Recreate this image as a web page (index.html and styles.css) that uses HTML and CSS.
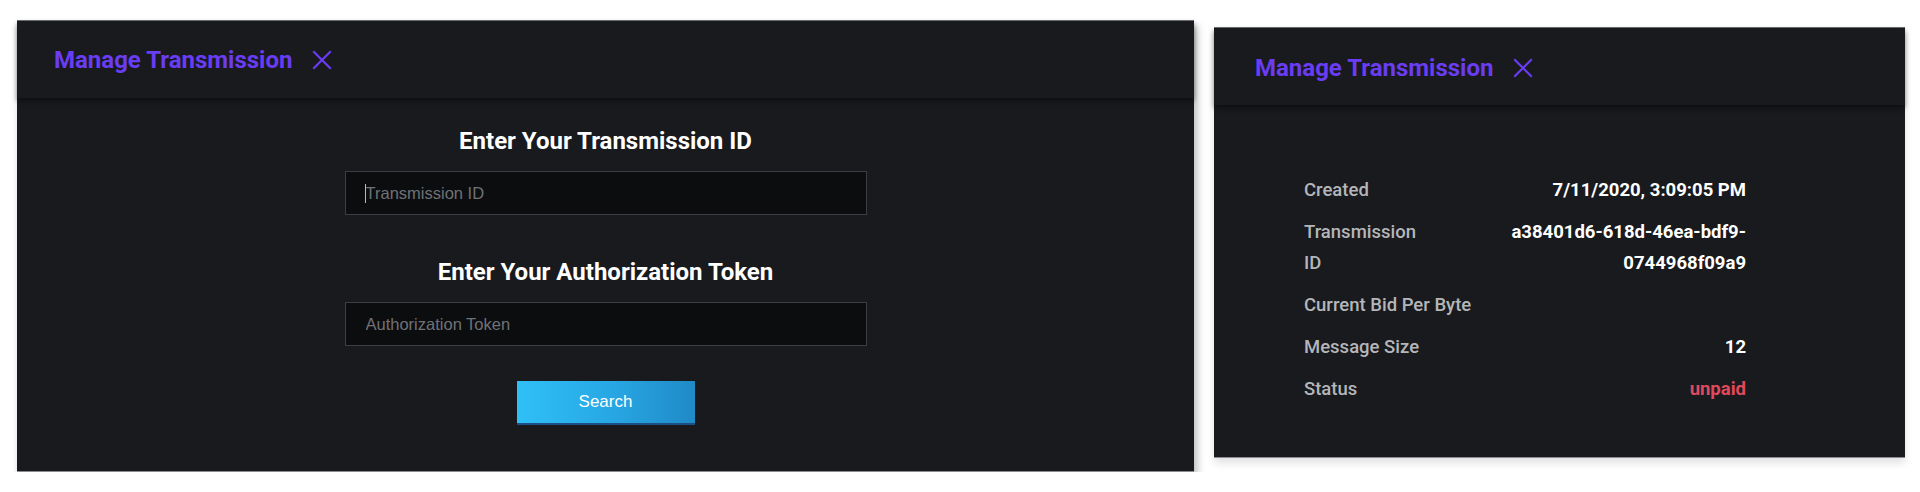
FILE: index.html
```html
<!DOCTYPE html>
<html lang="en">
<head>
<meta charset="utf-8">
<title>Manage Transmission</title>
<link rel="stylesheet" href="styles.css">
</head>
<body>
<div class="page">
  <section class="panel panel-search">
    <header class="panel-head">
      <h2 class="panel-title">Manage Transmission</h2>
      <button class="close-btn" type="button" aria-label="Close">
        <svg viewBox="0 0 20 20" width="20" height="20"><path d="M2 2 L18 18 M18 2 L2 18" fill="none" stroke="currentColor" stroke-width="2.2" stroke-linecap="square"/></svg>
      </button>
    </header>
    <div class="panel-body search-body">
      <h3 class="field-title">Enter Your Transmission ID</h3>
      <div class="field">
        <input class="text-input" type="text" placeholder="Transmission ID">
        <span class="caret"></span>
      </div>
      <h3 class="field-title field-title-second">Enter Your Authorization Token</h3>
      <div class="field">
        <input class="text-input" type="text" placeholder="Authorization Token">
      </div>
      <button class="search-btn" type="button">Search</button>
    </div>
  </section>

  <section class="panel panel-details">
    <header class="panel-head panel-head-details">
      <h2 class="panel-title">Manage Transmission</h2>
      <button class="close-btn" type="button" aria-label="Close">
        <svg viewBox="0 0 20 20" width="20" height="20"><path d="M2 2 L18 18 M18 2 L2 18" fill="none" stroke="currentColor" stroke-width="2.2" stroke-linecap="square"/></svg>
      </button>
    </header>
    <div class="panel-body details-body">
      <div class="details">
        <div class="detail-row">
          <span class="detail-label">Created</span>
          <span class="detail-value">7/11/2020, 3:09:05 PM</span>
        </div>
        <div class="detail-row">
          <span class="detail-label">Transmission ID</span>
          <span class="detail-value">a38401d6-618d-46ea-bdf9-<wbr>0744968f09a9</span>
        </div>
        <div class="detail-row">
          <span class="detail-label">Current Bid Per Byte</span>
          <span class="detail-value"></span>
        </div>
        <div class="detail-row">
          <span class="detail-label">Message Size</span>
          <span class="detail-value">12</span>
        </div>
        <div class="detail-row">
          <span class="detail-label">Status</span>
          <span class="detail-value status-unpaid">unpaid</span>
        </div>
      </div>
    </div>
  </section>
</div>
</body>
</html>
```

FILE: styles.css
```css
* {
  box-sizing: border-box;
}

html, body {
  margin: 0;
  padding: 0;
  background: #ffffff;
}

body {
  font-family: Roboto, "Liberation Sans", sans-serif;
  color: #ffffff;
}

.page {
  display: flex;
  align-items: flex-start;
  gap: 20px;
  padding: 20px 0 0 17px;
}

.panel {
  background: #181a1e;
  display: flex;
  flex-direction: column;
  border-top: 1px solid #6d6f73;
  border-bottom: 1px solid #8a8c90;
}

.panel-search {
  width: 1177px;
  height: 452px;
  box-shadow: 3px 6px 8px rgba(0, 0, 0, 0.28);
}

.panel-details {
  width: 691px;
  height: 431px;
  margin-top: 7px;
  box-shadow: 0 5px 8px rgba(0, 0, 0, 0.12);
}

.panel-head {
  height: 77px;
  flex: none;
  display: flex;
  align-items: center;
  gap: 20px;
  padding: 0 0 0 37px;
  background: #181a1e;
  position: relative;
  z-index: 1;
  box-shadow: 0 3px 5px rgba(0, 0, 0, 0.45);
}

.panel-head-details {
  padding-left: 41px;
  padding-top: 2px;
}

.panel-title {
  margin: 0;
  font-family: Roboto, "Liberation Sans", sans-serif;
  font-weight: 700;
  font-size: 24px;
  line-height: 30px;
  color: #6a3cf2;
}

.close-btn {
  border: 0;
  background: none;
  padding: 0;
  margin: 0;
  width: 20px;
  height: 20px;
  color: #6a3cf2;
  display: flex;
  cursor: pointer;
}

.panel-body {
  flex: 1;
}

.search-body {
  display: flex;
  flex-direction: column;
  align-items: center;
  padding-top: 29px;
}

.field-title {
  margin: 0;
  font-weight: 700;
  font-size: 24px;
  line-height: 28px;
  color: #ffffff;
}

.field-title-second {
  margin-top: 43px;
}

.field {
  position: relative;
  width: 522px;
  margin-top: 16px;
}

.text-input {
  display: block;
  width: 100%;
  height: 44px;
  margin: 0;
  padding: 0 20px;
  background: #0c0d0f;
  border: 1px solid #3a3d42;
  border-radius: 0;
  outline: none;
  color: #ffffff;
  font-family: "Liberation Sans", Arial, sans-serif;
  font-size: 16.5px;
}

.text-input::placeholder {
  color: #6f7277;
}

.caret {
  position: absolute;
  left: 20px;
  top: 13px;
  width: 1px;
  height: 19px;
  background: #b8babd;
}

.search-btn {
  margin-top: 35px;
  width: 178px;
  height: 44px;
  border: 0;
  border-bottom: 2px solid #1d4f86;
  border-radius: 0;
  background: linear-gradient(90deg, #2fc0f6 0%, #27a6e3 55%, #1f8ac6 100%);
  color: #ffffff;
  font-family: "Liberation Sans", Arial, sans-serif;
  font-size: 17px;
  cursor: pointer;
}

.details-body {
  padding: 65px 0 0 90px;
}

.details {
  width: 442px;
  display: flex;
  flex-direction: column;
}

.detail-row {
  display: flex;
  justify-content: space-between;
  align-items: flex-start;
  gap: 0;
  padding: 5px 0;
  font-size: 18.5px;
  line-height: 31.7px;
}

.detail-label {
  flex: 0 1 auto;
  font-weight: 500;
  color: #b4b6ba;
}

.detail-value {
  flex: 0 1 auto;
  font-weight: 700;
  color: #ffffff;
  text-align: right;
}

.status-unpaid {
  color: #e2485c;
}
```
